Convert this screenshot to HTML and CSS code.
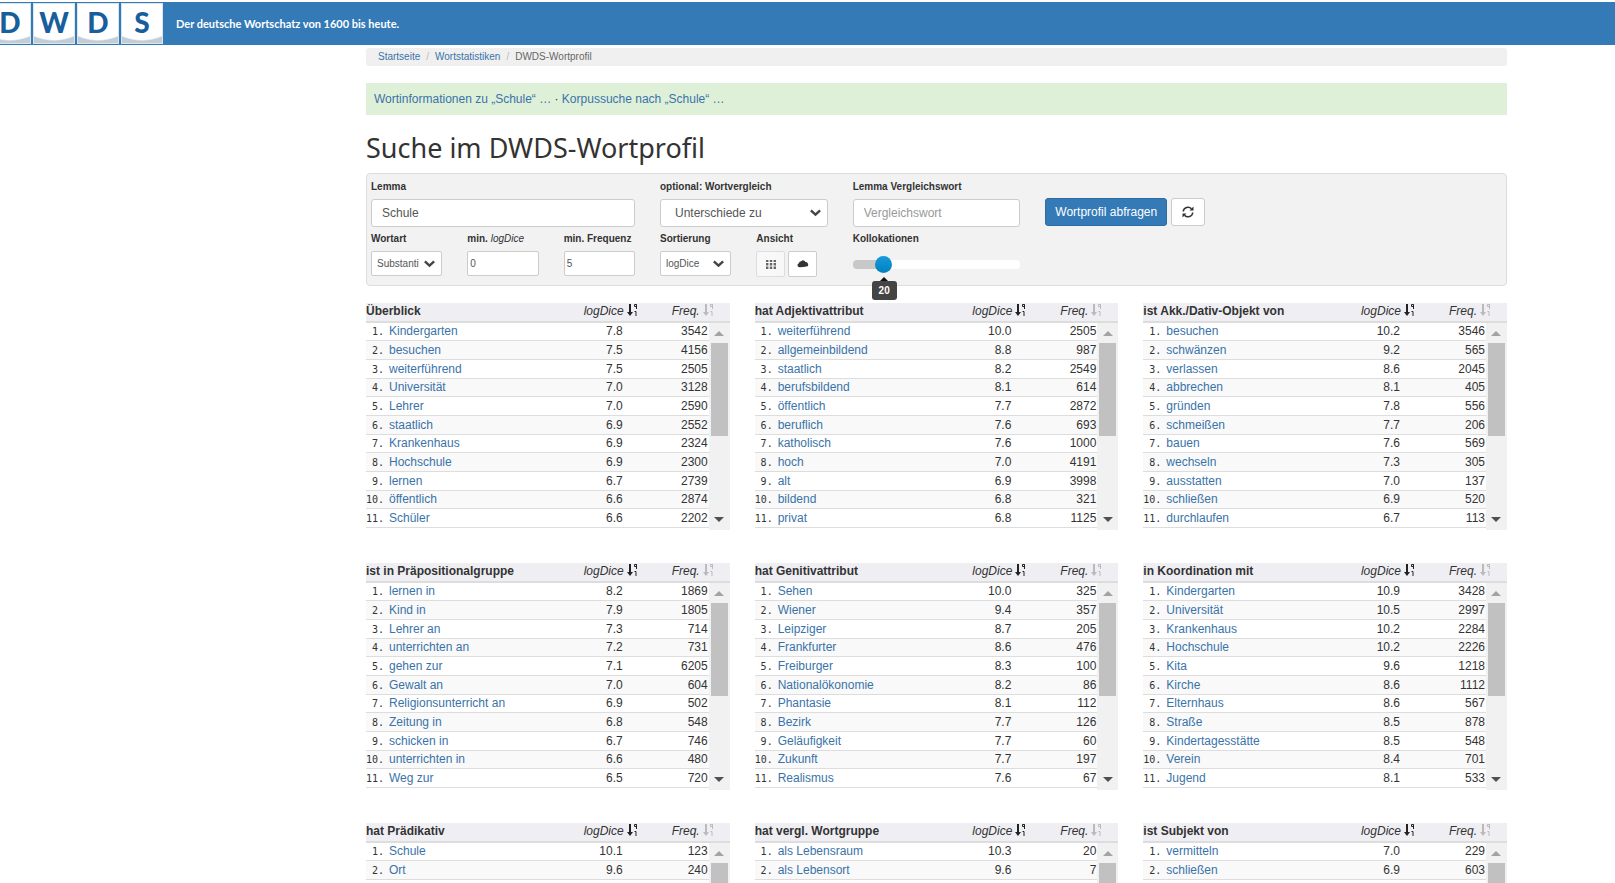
FILE: index.html
```html
<!DOCTYPE html>
<html lang="de">
<head>
<meta charset="utf-8">
<title>DWDS-Wortprofil</title>
<link rel="stylesheet" href="styles.css">
</head>
<body>
<svg class="sprite" aria-hidden="true">
  <symbol id="sort" viewBox="0 0 11 12">
    <path d="M2 0h2v8h2L3 12 0 8h2z"/>
    <path d="M7.5 .5h2v2h-2zM9.5 .5v4.5M7.5 7.5h1.5V12" fill="none" stroke="currentColor"/>
  </symbol>
  <symbol id="chevron" viewBox="0 0 10 7">
    <path d="M.8 1.2L5 5l4.200-3.800" fill="none" stroke="currentColor" stroke-width="2.200"/>
  </symbol>
</svg>

<header class="topbar">
  <a class="logo" href="#" aria-label="DWDS"><span class="tile">D</span><span class="tile">W</span><span class="tile">D</span><span class="tile">S</span></a>
  <span class="claim">Der deutsche Wortschatz von 1600 bis heute.</span>
</header>

<main class="page">
  <nav class="breadcrumb" aria-label="Pfad">
    <a href="#">Startseite</a><span class="sep">/</span><a href="#">Wortstatistiken</a><span class="sep">/</span><span>DWDS-Wortprofil</span>
  </nav>
  <p class="hint"><a href="#">Wortinformationen zu „Schule“ …</a> · <a href="#">Korpussuche nach „Schule“ …</a></p>
  <h1>Suche im DWDS-Wortprofil</h1>

  <form class="panel">
    <div class="field span3">
      <label for="lemma">Lemma</label>
      <input class="control" id="lemma" type="text" value="Schule">
    </div>
    <div class="field span2">
      <label for="compare">optional: Wortvergleich</label>
      <div class="select">
        <select class="control wide" id="compare"><option>Unterschiede zu</option></select>
        <svg class="chevron"><use href="#chevron"/></svg>
      </div>
    </div>
    <div class="field span2">
      <label for="lemma2">Lemma Vergleichswort</label>
      <input class="control" id="lemma2" type="text" placeholder="Vergleichswort">
    </div>
    <div class="actions">
      <button class="btn primary" type="submit">Wortprofil abfragen</button>
      <button class="btn reset" type="reset" aria-label="Zurücksetzen">
        <svg width="12" height="12" viewBox="0 0 12 12" fill="none" stroke="currentColor" stroke-width="1.5">
          <path d="M1.2 5.5A4.8 4.8 0 0 1 9.5 2.8M10.8 6.5A4.8 4.8 0 0 1 2.5 9.2"/>
          <path d="M11.5 .5v4h-4zM.5 11.5v-4h4z" fill="currentColor" stroke="none"/>
        </svg>
      </button>
    </div>

    <div class="field row2">
      <label for="pos">Wortart</label>
      <div class="select">
        <select class="control small" id="pos"><option>Substantiv</option></select>
        <svg class="chevron"><use href="#chevron"/></svg>
      </div>
    </div>
    <div class="field">
      <label for="mindice">min. <i>logDice</i></label>
      <input class="control small number" id="mindice" type="text" value="0">
    </div>
    <div class="field">
      <label for="minfreq">min. Frequenz</label>
      <input class="control small number" id="minfreq" type="text" value="5">
    </div>
    <div class="field">
      <label for="order">Sortierung</label>
      <div class="select">
        <select class="control small" id="order"><option>logDice</option></select>
        <svg class="chevron"><use href="#chevron"/></svg>
      </div>
    </div>
    <div class="field" role="group" aria-labelledby="view">
      <span class="label" id="view">Ansicht</span>
      <div class="views">
        <button class="btn view active" type="button" aria-label="Tabelle">
          <svg width="10" height="9" viewBox="0 0 10 9" fill="currentColor"><path d="M0 0h2.4v2H0zM3.8 0h2.4v2H3.8zM7.6 0H10v2H7.6zM0 3h2.4v2.5H0zM3.8 3h2.4v2.5H3.8zM7.6 3H10v2.5H7.6zM0 6.5h2.4V9H0zM3.8 6.5h2.4V9H3.8zM7.6 6.5H10V9H7.6z"/></svg>
        </button>
        <button class="btn view" type="button" aria-label="Wortwolke">
          <svg width="12" height="8" viewBox="0 0 12 8" fill="currentColor"><path d="M2.4 7.200A2 2 0 0 1 1.900 3.300 2.400 2.400 0 0 1 4.200 1.200 2.600 2.600 0 0 1 8.500 2 2.600 2.600 0 0 1 10.600 6.200L6.500 7z"/></svg>
        </button>
      </div>
    </div>
    <div class="field span2">
      <label for="count">Kollokationen</label>
      <div class="slider">
        <input id="count" type="range" min="0" max="100" value="15">
        <output class="bubble" for="count">20</output>
      </div>
    </div>
  </form>

  <div class="results" id="results"></div>
</main>
<script src="results.js"></script>
</body>
</html>
```
FILE: results.js
```js
const groups = [
  ["Überblick", "Kindergarten|7.8|3542;besuchen|7.5|4156;weiterführend|7.5|2505;Universität|7.0|3128;Lehrer|7.0|2590;staatlich|6.9|2552;Krankenhaus|6.9|2324;Hochschule|6.9|2300;lernen|6.7|2739;öffentlich|6.6|2874;Schüler|6.6|2202"],
  ["hat Adjektivattribut", "weiterführend|10.0|2505;allgemeinbildend|8.8|987;staatlich|8.2|2549;berufsbildend|8.1|614;öffentlich|7.7|2872;beruflich|7.6|693;katholisch|7.6|1000;hoch|7.0|4191;alt|6.9|3998;bildend|6.8|321;privat|6.8|1125"],
  ["ist Akk./Dativ-Objekt von", "besuchen|10.2|3546;schwänzen|9.2|565;verlassen|8.6|2045;abbrechen|8.1|405;gründen|7.8|556;schmeißen|7.7|206;bauen|7.6|569;wechseln|7.3|305;ausstatten|7.0|137;schließen|6.9|520;durchlaufen|6.7|113"],
  ["ist in Präpositionalgruppe", "lernen in|8.2|1869;Kind in|7.9|1805;Lehrer an|7.3|714;unterrichten an|7.2|731;gehen zur|7.1|6205;Gewalt an|7.0|604;Religionsunterricht an|6.9|502;Zeitung in|6.8|548;schicken in|6.7|746;unterrichten in|6.6|480;Weg zur|6.5|720"],
  ["hat Genitivattribut", "Sehen|10.0|325;Wiener|9.4|357;Leipziger|8.7|205;Frankfurter|8.6|476;Freiburger|8.3|100;Nationalökonomie|8.2|86;Phantasie|8.1|112;Bezirk|7.7|126;Geläufigkeit|7.7|60;Zukunft|7.7|197;Realismus|7.6|67"],
  ["in Koordination mit", "Kindergarten|10.9|3428;Universität|10.5|2997;Krankenhaus|10.2|2284;Hochschule|10.2|2226;Kita|9.6|1218;Kirche|8.6|1112;Elternhaus|8.6|567;Straße|8.5|878;Kindertagesstätte|8.5|548;Verein|8.4|701;Jugend|8.1|533"],
  ["hat Prädikativ", "Schule|10.1|123;Ort|9.6|240"],
  ["hat vergl. Wortgruppe", "als Lebensraum|10.3|20;als Lebensort|9.6|7"],
  ["ist Subjekt von", "vermitteln|7.0|229;schließen|6.9|603"]
];

const sortIcon = '<svg class="sort"><use href="#sort"/></svg>';

document.getElementById("results").innerHTML = groups.map(([title, data]) => {
  const rows = data.split(";").map((entry, i) => {
    const [word, dice, freq] = entry.split("|");
    return `<tr><td class="word"><span class="rank">${i + 1}.</span><a href="#">${word}</a></td><td class="dice">${dice}</td><td class="freq">${freq}</td></tr>`;
  }).join("");
  return `<section class="group">
    <table>
      <thead><tr><th class="word">${title}</th><th class="dice sorted"><i>logDice</i>${sortIcon}</th><th class="freq"><i>Freq.</i>${sortIcon}</th></tr></thead>
      <tbody>${rows}</tbody>
    </table>
    <div class="scrollbar" aria-hidden="true"><span class="up"></span><span class="thumb"></span><span class="down"></span></div>
  </section>`;
}).join("");
```
FILE: styles.css
```css
* { box-sizing: border-box; }

body {
  display: flex;
  flex-direction: column;
  height: 100vh;
  margin: 0;
  overflow: hidden;
  background: #fff;
  color: #333;
  font: 12px/17px "Liberation Sans", Arial, sans-serif;
}

a { color: #3a73a9; text-decoration: none; }
.sprite { position: absolute; width: 0; height: 0; }

/* top bar */
.topbar {
  display: flex;
  flex: none;
  align-items: center;
  gap: 13px;
  height: 43px;
  margin-top: 2px;
  background: #337ab7;
}
.logo { display: flex; gap: 2px; margin-left: -11px; }
.tile {
  width: 42px;
  height: 41px;
  border: 1px solid #dbe6ee;
  background: radial-gradient(ellipse 44px 37px at 50% 0, #fff 96%, #c3cdd5 100%);
  color: #175e9c;
  font: 900 28px/37px Lato, sans-serif;
  text-align: center;
}
.claim { color: #fff; font: 700 11px/16px Lato, sans-serif; }

/* page */
.page {
  display: flex;
  flex: 1;
  flex-direction: column;
  min-height: 0;
  padding: 3px 108px 0 366px;
}
.breadcrumb {
  flex: none;
  padding: 0 12px;
  border-radius: 3px;
  background: #f0f0f0;
  color: #666;
  font-size: 10px;
  line-height: 18px;
}
.sep { padding: 0 6px; color: #bbb; }
.hint {
  flex: none;
  margin: 17px 0 0;
  padding: 8px;
  background: #dff0d8;
  line-height: 16px;
}
h1 {
  flex: none;
  margin: 15px 0 7px;
  font: 400 27px/36px "Noto Sans", sans-serif;
}

/* search form */
.panel {
  display: grid;
  flex: none;
  grid-template-columns: repeat(12, minmax(0, 1fr));
  gap: 5px 25px;
  padding: 6px 4px 8px;
  border: 1px solid #ddd;
  border-radius: 4px;
  background: #f2f2f2;
}
.span2 { grid-column: span 2; }
.span3 { grid-column: span 3; }
.row2 { grid-column-start: 1; }
.field label, .label {
  display: block;
  margin-bottom: 5px;
  font-size: 10px;
  font-weight: 700;
  line-height: 14px;
  white-space: nowrap;
}
.field label i { font-weight: 400; }
.control {
  display: block;
  width: 100%;
  height: 28px;
  padding: 0 10px;
  border: 1px solid #ccc;
  border-radius: 3px;
  appearance: none;
  background: #fff;
  color: #555;
  font: 12px "Liberation Sans", Arial, sans-serif;
}
.control::placeholder { color: #999; }
.wide { padding-left: 14px; }
.small { height: 25px; padding: 0 22px 0 5px; border-radius: 2px; font-size: 10px; }
.number { padding: 0 2px; }
.select { position: relative; }
.chevron {
  position: absolute;
  top: calc(50% - 4px);
  right: 7px;
  width: 11px;
  height: 8px;
  color: #444;
  pointer-events: none;
}
.actions {
  display: flex;
  grid-column: span 5;
  gap: 4px;
  align-items: flex-start;
  padding-top: 18px;
}
.btn {
  display: flex;
  align-items: center;
  justify-content: center;
  height: 28px;
  padding: 0 10px;
  border: 1px solid #ccc;
  border-radius: 3px;
  background: #fff;
  color: #333;
  font: 12px "Liberation Sans", Arial, sans-serif;
}
.primary { padding: 0 9px; border-color: #2e6da4; background: #337ab7; color: #fff; }
.views { display: flex; gap: 3px; }
.view { width: 29px; height: 26px; padding: 0; border-radius: 2px; }
.view.active { border-color: #ddd; background: #f8f8f8; color: #666; }

.slider { position: relative; display: flex; height: 26px; align-items: center; }
.slider input {
  width: 100%;
  height: 9px;
  margin: 0;
  border-radius: 4px;
  appearance: none;
  background: linear-gradient(90deg, #c8c8c8 18%, #fff 18%);
}
.slider input::-webkit-slider-thumb {
  width: 17px;
  height: 17px;
  border-radius: 50%;
  appearance: none;
  background: linear-gradient(#149bdf, #0480be);
}
.bubble {
  position: absolute;
  top: 30px;
  left: 19px;
  width: 25px;
  border-radius: 3px;
  background: #444;
  color: #fff;
  font-size: 10px;
  font-weight: 700;
  line-height: 19px;
  text-align: center;
}
.bubble::before {
  position: absolute;
  top: -4px;
  left: 8px;
  border: solid transparent;
  border-width: 0 4px 4px;
  border-bottom-color: #111;
  content: "";
}

/* result tables */
.results {
  display: grid;
  flex: 1;
  grid-template-columns: repeat(3, minmax(0, 1fr));
  grid-template-rows: auto auto 1fr;
  gap: 33px 25px;
  min-height: 0;
  margin-top: 17px;
}
.group { position: relative; padding-bottom: 2px; overflow: hidden; }
table { width: 100%; border-collapse: separate; border-spacing: 0; table-layout: fixed; }
th {
  height: 20px;
  padding: 0 0 2px;
  border-bottom: 2px solid #ddd;
  background: #efeff3;
  line-height: 16px;
  text-align: left;
  white-space: nowrap;
}
th i { font-weight: 400; }
td { height: 19px; padding: 0; border-bottom: 1px solid #ddd; }
tbody tr:nth-child(3n+1) td { height: 18px; }
tbody tr:nth-child(even) { background: #f9f9f9; }
th.dice, th.freq { text-align: right; }
th.dice { width: 93px; }
th.freq { width: 92px; padding-right: 16px; }
td.dice { padding-right: 15px; text-align: right; }
td.freq { padding-right: 22px; text-align: right; }
.rank {
  display: inline-block;
  width: 18px;
  margin-right: 5px;
  font: 10px/16px "DejaVu Sans Mono", monospace;
  text-align: right;
}
.sort {
  width: 11px;
  height: 12px;
  margin-left: 3px;
  color: #bbb;
  fill: currentColor;
  vertical-align: -1px;
}
.sorted .sort { color: #222; }

.scrollbar {
  position: absolute;
  top: 20px;
  right: 0;
  bottom: 0;
  display: flex;
  flex-direction: column;
  align-items: center;
  width: 21px;
  min-height: 207px;
  background: #f1f1f1;
}
.thumb { flex: none; width: 17px; height: 93px; background: #c1c1c1; }
.up, .down { border: 5px solid transparent; }
.up { margin: 3px 0 7px; border-bottom-color: #a3a3a3; }
.down { margin: auto 0 3px; border-top-color: #505050; }
```
